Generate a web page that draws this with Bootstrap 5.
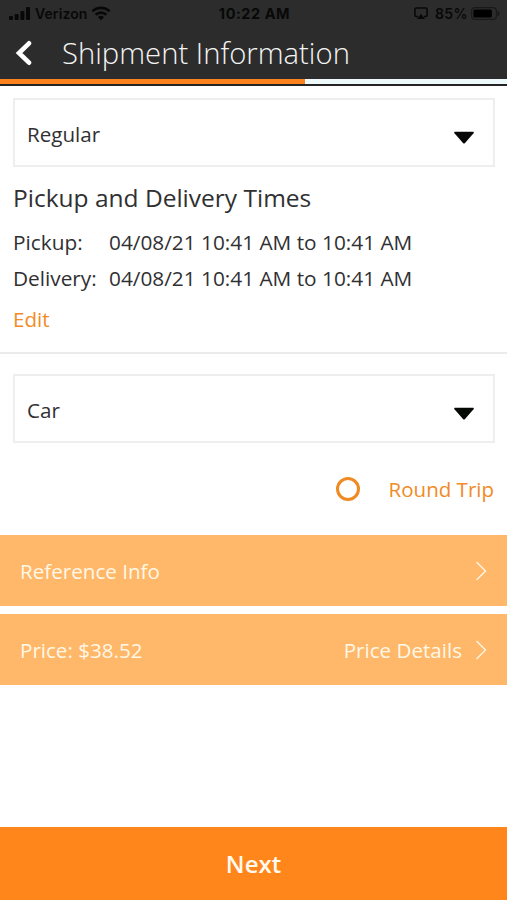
<!DOCTYPE html>
<html lang="en">
<head>
<meta charset="utf-8">
<meta name="viewport" content="width=device-width, initial-scale=1">
<title>Shipment Information</title>
<link href="https://cdn.jsdelivr.net/npm/bootstrap@5.3.0/dist/css/bootstrap.min.css" rel="stylesheet">
<style>
  body { font-family: "Open Sans", sans-serif; font-size: 20.6px; line-height: 28px; color: #303032; background: #fff; }
  svg { display: block; flex: none; }
  .app-head { background: #2c2c2c; border-bottom: 2px solid #242424; height: 86px; }
  .status-bar { height: 27px; font: 600 14px/27px Inter, sans-serif; color: #080808; padding: 0 7px 0 9px; }
  .status-bar > div { flex: 1 1 0; }
  .carrier { margin-left: 4px; letter-spacing: .1px; }
  .clock { font-weight: 700; font-size: 14.5px; letter-spacing: .55px; }
  .charge { letter-spacing: .4px; margin: 0 3px 0 7px; }
  .title-bar { height: 52px; padding-left: 15px; }
  .title-bar h1 { font-size: 29.25px; font-weight: 300; line-height: 40px; margin: 0 0 0 30px; color: #f4f4f4; }
  .step-track { --bs-progress-height: 5px; --bs-progress-bg: #eef9fb; --bs-progress-bar-bg: #fb821c; --bs-progress-border-radius: 0; }
  .section { padding: 12px 12px 0 13px; }
  .section + .rule + .section { padding-top: 20px; }
  .picker { height: 69px; border: 2px solid #eee; padding: 3px 18px 0 12px; background: #fff; color: inherit; }
  .picker svg { margin-top: 6px; }
  .section h2 { font-size: 24.5px; font-weight: 400; line-height: 32px; margin: 15px 0 0; }
  .times { padding-top: 10px; font-size: 20.8px; }
  .time-row { height: 36px; line-height: 36px; }
  .time-row dt { width: 96px; font-weight: 400; }
  .accent { color: #f18b25; text-decoration: none; }
  .edit-link { margin-top: 9px; padding-bottom: 19px; }
  .rule { height: 2px; background: #ebebeb; }
  .trip { height: 92px; gap: 29px; padding-right: 1px; font-size: 20.5px; }
  .ring { width: 24px; height: 24px; border: 3px solid #f08a24; border-radius: 50%; }
  .strips { gap: 8px; }
  .strip { height: 71px; background: #ffb769; color: #fff8e6; padding: 1px 20px 0; }
  .strip svg { margin: 0 0 1px 13px; }
  .next { height: 73px; background: #ff861a; color: #fffaf0; font-size: 24px; font-weight: 600; border: 0; }
</style>
<script src="https://cdn.jsdelivr.net/npm/bootstrap@5.3.0/dist/js/bootstrap.bundle.min.js"></script>
</head>
<body class="d-flex flex-column vh-100 overflow-hidden">
<header class="app-head">
  <div class="status-bar d-flex align-items-center">
    <div class="d-flex align-items-center">
      <svg width="22" height="14" viewBox="0 0 22 14" fill="#080808"><rect x="0" y="9" width="4" height="4" rx="1"/><rect x="5.7" y="7" width="4" height="6" rx="1"/><rect x="11.4" y="4" width="4" height="9" rx="1"/><rect x="17" y="0" width="4" height="13" rx="1"/></svg>
      <span class="carrier">Verizon</span>
      <svg class="ms-1" width="20" height="15" viewBox="0 0 20 15" fill="none" stroke="#080808" stroke-width="2.6"><path d="M1.4 5.4a12.3 12.3 0 0 1 17.2 0M4.6 8.8a7.7 7.7 0 0 1 10.8 0"/><path d="M6.9 11.2a4.5 4.5 0 0 1 6.2 0L10 14.3z" fill="#080808" stroke="none"/></svg>
    </div>
    <span class="clock">10:22 AM</span>
    <div class="d-flex align-items-center justify-content-end">
      <svg width="14" height="13" viewBox="0 0 14 13" fill="none" stroke="#080808" stroke-width="1.6"><path d="M4 9.5H2.3Q.9 9.5.9 8V2.4Q.9 1 2.3 1h9.4q1.4 0 1.4 1.4V8q0 1.5-1.4 1.5H10"/><path d="M7 6.7l4 5.3H3z" fill="#080808" stroke="none"/></svg>
      <span class="charge">85%</span>
      <svg width="29" height="13" viewBox="0 0 29 13"><rect x=".6" y=".6" width="24.8" height="11.8" rx="3.5" fill="none" stroke="#191919" stroke-width="1.2"/><rect x="2.4" y="2.4" width="18.5" height="8.2" rx="1.5" fill="#000"/><path d="M26.5 3.5q2.2 1.2 2.2 3t-2.2 3z" fill="#191919"/></svg>
    </div>
  </div>
  <div class="title-bar d-flex align-items-center">
    <svg width="17" height="26" viewBox="0 0 17 26" fill="none" stroke="#fff" stroke-width="4.6" stroke-linecap="round" stroke-linejoin="miter"><path d="M14 3.3L4 13l10 9.7"/></svg>
    <h1>Shipment Information</h1>
  </div>
  <div class="progress step-track"><div class="progress-bar" style="width:60.1%"></div></div>
</header>

<main class="flex-grow-1">
  <section class="section">
    <button type="button" class="picker w-100 d-flex align-items-center justify-content-between text-start">
      <span>Regular</span>
      <svg width="22" height="13" viewBox="0 0 22 13"><path d="M2 .8h18q1.500 0 .5 1.400L12 12q-1 1-2 0L1.500 2.200Q.5.8 2 .8z" fill="#060806"/></svg>
    </button>
    <h2>Pickup and Delivery Times</h2>
    <dl class="mb-0 times">
      <div class="time-row d-flex"><dt>Pickup:</dt><dd class="mb-0">04/08/21 10:41 AM to 10:41 AM</dd></div>
      <div class="time-row d-flex"><dt>Delivery:</dt><dd class="mb-0">04/08/21 10:41 AM to 10:41 AM</dd></div>
    </dl>
    <a href="#" class="accent d-block edit-link">Edit</a>
  </section>
  <div class="rule"></div>
  <section class="section">
    <button type="button" class="picker w-100 d-flex align-items-center justify-content-between text-start">
      <span>Car</span>
      <svg width="22" height="13" viewBox="0 0 22 13"><path d="M2 .8h18q1.500 0 .5 1.400L12 12q-1 1-2 0L1.500 2.200Q.5.8 2 .8z" fill="#060806"/></svg>
    </button>
    <div class="d-flex align-items-center justify-content-end accent trip">
      <span class="ring"></span><span>Round Trip</span>
    </div>
  </section>
  <div class="d-grid strips">
    <div class="strip d-flex align-items-center justify-content-between">
      <span>Reference Info</span>
      <svg width="12" height="20" viewBox="0 0 12 20" fill="none" stroke="#fff3dc" stroke-width="1.5"><path d="M1.5 1l9 9-9 9"/></svg>
    </div>
    <div class="strip d-flex align-items-center">
      <span class="me-auto">Price: $38.52</span>
      <span>Price Details</span>
      <svg width="12" height="20" viewBox="0 0 12 20" fill="none" stroke="#fff3dc" stroke-width="1.5"><path d="M1.5 1l9 9-9 9"/></svg>
    </div>
  </div>
</main>
<button type="button" class="next w-100">Next</button>
</body>
</html>
